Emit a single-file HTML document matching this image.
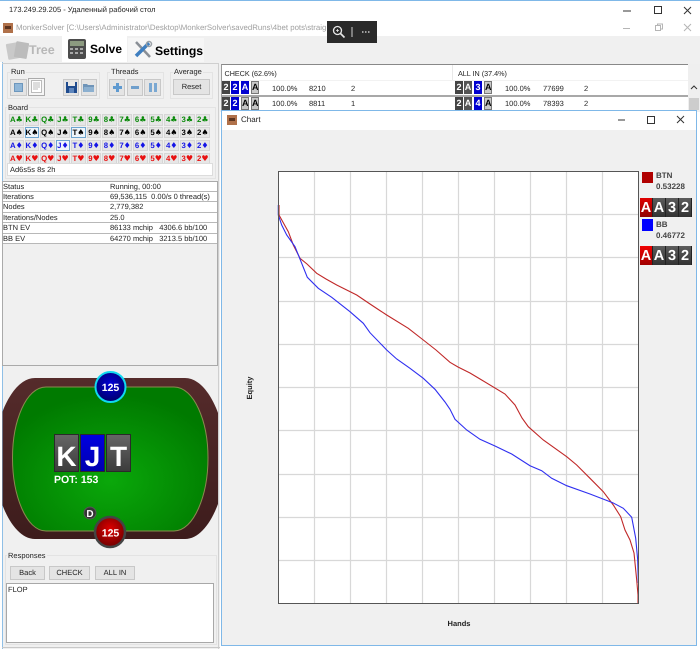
<!DOCTYPE html>
<html><head><meta charset="utf-8">
<style>
html,body{margin:0;padding:0;background:#fff}
#p{position:relative;width:700px;height:649px;overflow:hidden;background:#fff;font:7.500px "Liberation Sans","DejaVu Sans",sans-serif;color:#222;text-rendering:geometricPrecision}
.a,.t{position:absolute;white-space:nowrap}
.t{line-height:10px}
.gb{position:absolute;border:1px solid #e3e3e3;box-sizing:border-box}
.btn{position:absolute;background:#e4e4e4;border:1px solid #c8c8c8;box-sizing:border-box;text-align:center;line-height:12px;font-size:7.500px;color:#222}
#board{position:absolute;left:9px;top:114px;display:grid;grid-template-columns:repeat(13,15.55px);grid-auto-rows:12.85px}
#board span{display:block;width:14.5px;height:11.5px;box-sizing:border-box;background:#e6e6e6;border:1px solid #d6d6d6;font-size:7.800px;font-weight:bold;line-height:9.5px;text-align:center;overflow:hidden;white-space:nowrap}
#board span i{font:normal 8px/9.500px "DejaVu Sans",sans-serif}
#board span.h{background:#eef5fb;border:1px solid #6ea5d0}
.c{color:#0a8a0a}.s{color:#000}.d{color:#1414e6}.r{color:#e81010}
.row{position:absolute;left:3px;width:214px;border-bottom:1px solid #b8b8b8;box-sizing:border-box;background:#fff;line-height:9.500px;font-size:7.500px}
.row b{font-weight:normal;position:absolute;left:0}
.row i{font-style:normal;position:absolute;left:107px}
.k{position:absolute;width:8px;height:13px;box-sizing:border-box;font-size:9px;font-weight:bold;text-align:center;line-height:13px;color:#fff;background:#444}
.k.u{background:#0000d0}.k.l{background:#c8c8c8;color:#000;border:1px solid #777;line-height:11px}
.lg{position:absolute;width:13px;height:19px;box-sizing:border-box;background:linear-gradient(#5c5c5c,#333);border-right:1px solid #222;color:#fff;font:bold 14.500px/20px "Liberation Sans",sans-serif;text-align:center}
.f{position:absolute;width:25px;height:38px;box-sizing:border-box;border:1px solid #2a2a2a;background:linear-gradient(#666,#3c3c3c);color:#fff;font:bold 28px/44px "Liberation Sans",sans-serif;text-align:center}
</style></head><body><div id="p">

<div class="a" style="left:0;top:0;width:700px;height:1px;background:#7fb8e8"></div>
<div class="t" style="left:9px;top:5px;font-size:7.500px;color:#222">173.249.29.205 - Удаленный рабочий стол</div>
<svg class="a" style="left:650px;top:4px" width="50" height="14" fill="none" stroke="#333"><rect x="4.500" y="2.500" width="7" height="7"/><path d="M34 3l7 7M41 3l-7 7"/></svg>
<svg class="a" style="left:622px;top:4px" width="14" height="14" stroke="#333"><path d="M1 7h8"/></svg>

<div class="a" style="left:3px;top:23px;width:10px;height:10px;background:#b0714a"></div>
<div class="a" style="left:5px;top:26px;width:6px;height:3px;background:#5b3420"></div>
<div class="t" style="left:16px;top:23px;font-size:7.850px;color:#a0a0a0;width:311px;overflow:hidden">MonkerSolver [C:\Users\Administrator\Desktop\MonkerSolver\savedRuns\4bet pots\straig</div>
<svg class="a" style="left:622px;top:21px" width="14" height="14" stroke="#b5b5b5"><path d="M1 7.500h7"/></svg>
<svg class="a" style="left:650px;top:22px" width="50" height="12" fill="none" stroke="#b5b5b5"><rect x="5.500" y="3.500" width="5" height="5"/><path d="M7.500 3.500v-1.500h5v5h-2M34 2l7 7M41 2l-7 7"/></svg>

<div class="a" style="left:0;top:36px;width:700px;height:26px;background:#f0f0f0"></div>
<div class="a" style="left:62px;top:36px;width:65px;height:26px;background:#fff"></div>
<div class="a" style="left:128px;top:38px;width:76px;height:24px;background:#f6f6f6"></div>
<svg class="a" style="left:5px;top:39px" width="24" height="22"><g fill="#c9c9c9"><rect x="2" y="4" width="13" height="16" rx="1" transform="rotate(-10 8 12)"/><rect x="10" y="3" width="13" height="16" rx="1" transform="rotate(10 16 11)" fill="#bcbcbc"/></g></svg>
<div class="t" style="left:29px;top:43px;font:bold 12.500px/14px 'Liberation Sans',sans-serif;color:#b8b8b8">Tree</div>
<svg class="a" style="left:68px;top:39px" width="18" height="20"><rect x="0" y="0" width="18" height="20" rx="2" fill="#4c4c4c"/><rect x="2" y="2" width="14" height="5" fill="#8c9a80"/><g fill="#a8a8a8"><rect x="2" y="9" width="3" height="2"/><rect x="7" y="9" width="3" height="2"/><rect x="12" y="9" width="3" height="2"/><rect x="2" y="13" width="3" height="2"/><rect x="7" y="13" width="3" height="2"/><rect x="12" y="13" width="3" height="2"/></g></svg>
<div class="t" style="left:90px;top:42px;font:bold 12px/14px 'Liberation Sans',sans-serif;color:#000">Solve</div>
<svg class="a" style="left:132px;top:40px" width="21" height="20" fill="none"><path d="M4 2l14 15" stroke="#8a8f96" stroke-width="2.500"/><path d="M17 3L4 16" stroke="#3f7fc0" stroke-width="3.500"/><circle cx="17" cy="4" r="2.500" stroke="#9aa0a6" stroke-width="1.500"/></svg>
<div class="t" style="left:155px;top:44px;font:bold 12.200px/14px 'Liberation Sans',sans-serif;color:#000">Settings</div>

<!-- black overlay -->
<div class="a" style="left:327px;top:21px;width:50px;height:22px;background:#2a2a2a"></div>
<svg class="a" style="left:331px;top:24px" width="42" height="16" fill="none" stroke="#e8e8e8"><circle cx="6.500" cy="6.500" r="4" stroke-width="1.300"/><path d="M9.500 9.500l4 4" stroke-width="1.600"/><path d="M6.500 5v3M5 6.500h3" stroke-width=".8"/><path d="M21 3v10" stroke="#aaa" stroke-width="1.300"/><path d="M31 8h1.500M34 8h1.500M37 8h1.500" stroke-width="1.300"/></svg>

<!-- left panel -->
<div class="a" style="left:2px;top:62px;width:218px;height:587px;background:#f0f0f0"></div>
<div class="a" style="left:1.500px;top:62px;width:1px;height:587px;background:#8fbfe6"></div>
<div class="a" style="left:2px;top:63px;width:217px;height:1px;background:#cfcfcf"></div>
<div class="a" style="left:218px;top:63px;width:1px;height:586px;background:#cfcfcf"></div>
<div class="gb" style="left:7px;top:72px;width:93px;height:27px"></div>
<div class="gb" style="left:107px;top:72px;width:57px;height:27px"></div>
<div class="gb" style="left:170px;top:72px;width:43px;height:27px"></div>
<div class="t" style="left:10px;top:67px;background:#f0f0f0;padding:0 1px">Run</div>
<div class="t" style="left:110px;top:67px;background:#f0f0f0;padding:0 1px">Threads</div>
<div class="t" style="left:173px;top:67px;background:#f0f0f0;padding:0 1px">Average</div>
<div class="btn" style="left:10px;top:79px;width:17px;height:17px"></div>
<div class="a" style="left:14px;top:83px;width:9px;height:9px;background:#8fb6d8;border:1px solid #6d97bd;box-sizing:border-box"></div>
<div class="btn" style="left:28px;top:78px;width:17px;height:18px;background:#f6f6f6;border-color:#aaa"></div>
<svg class="a" style="left:31px;top:80px" width="11" height="13" fill="#fff" stroke="#bbb"><rect x=".5" y=".5" width="10" height="12"/><path d="M2 3h7M2 5h7M2 7h7M2 9h5"/></svg>
<div class="btn" style="left:63px;top:79px;width:16px;height:17px"></div>
<svg class="a" style="left:66px;top:82px" width="11" height="11"><rect width="11" height="11" fill="#1f4b8e"/><rect x="2" y="0" width="7" height="4" fill="#e8e8e8"/><rect x="3" y="6" width="5" height="5" fill="#5e86bd"/></svg>
<div class="btn" style="left:81px;top:79px;width:16px;height:17px"></div>
<svg class="a" style="left:83px;top:82px" width="12" height="11"><path d="M0 2h4l1 1h6v7H0z" fill="#6f94b8"/><path d="M0 10l1-5h10v5z" fill="#8cb0d0"/></svg>
<div class="btn" style="left:109px;top:79px;width:16px;height:17px"></div>
<svg class="a" style="left:112px;top:82px" width="11" height="11"><path d="M4 1h3v3h3v3H7v3H4V7H1V4h3z" fill="#5f9ad0"/></svg>
<div class="btn" style="left:127px;top:79px;width:16px;height:17px"></div>
<div class="a" style="left:131px;top:86px;width:8px;height:3px;background:#6f9fcc"></div>
<div class="btn" style="left:144px;top:79px;width:17px;height:17px"></div>
<div class="a" style="left:149px;top:83px;width:2.500px;height:9px;background:#7aa8d2"></div>
<div class="a" style="left:154px;top:83px;width:2.500px;height:9px;background:#7aa8d2"></div>
<div class="btn" style="left:173px;top:79px;width:37px;height:16px;line-height:14px">Reset</div>

<div class="gb" style="left:5px;top:107px;width:211px;height:72px"></div>
<div class="t" style="left:7px;top:103px;background:#f0f0f0;padding:0 1px">Board</div>
<div id="board">
<span class="c">A<i>♣</i></span><span class="c">K<i>♣</i></span><span class="c">Q<i>♣</i></span><span class="c">J<i>♣</i></span><span class="c">T<i>♣</i></span><span class="c">9<i>♣</i></span><span class="c">8<i>♣</i></span><span class="c">7<i>♣</i></span><span class="c">6<i>♣</i></span><span class="c">5<i>♣</i></span><span class="c">4<i>♣</i></span><span class="c">3<i>♣</i></span><span class="c">2<i>♣</i></span>
<span class="s">A<i>♠</i></span><span class="s h">K<i>♠</i></span><span class="s">Q<i>♠</i></span><span class="s">J<i>♠</i></span><span class="s h">T<i>♠</i></span><span class="s">9<i>♠</i></span><span class="s">8<i>♠</i></span><span class="s">7<i>♠</i></span><span class="s">6<i>♠</i></span><span class="s">5<i>♠</i></span><span class="s">4<i>♠</i></span><span class="s">3<i>♠</i></span><span class="s">2<i>♠</i></span>
<span class="d">A<i>♦</i></span><span class="d">K<i>♦</i></span><span class="d">Q<i>♦</i></span><span class="d h">J<i>♦</i></span><span class="d">T<i>♦</i></span><span class="d">9<i>♦</i></span><span class="d">8<i>♦</i></span><span class="d">7<i>♦</i></span><span class="d">6<i>♦</i></span><span class="d">5<i>♦</i></span><span class="d">4<i>♦</i></span><span class="d">3<i>♦</i></span><span class="d">2<i>♦</i></span>
<span class="r">A<i>♥</i></span><span class="r">K<i>♥</i></span><span class="r">Q<i>♥</i></span><span class="r">J<i>♥</i></span><span class="r">T<i>♥</i></span><span class="r">9<i>♥</i></span><span class="r">8<i>♥</i></span><span class="r">7<i>♥</i></span><span class="r">6<i>♥</i></span><span class="r">5<i>♥</i></span><span class="r">4<i>♥</i></span><span class="r">3<i>♥</i></span><span class="r">2<i>♥</i></span>
</div>
<div class="a" style="left:7px;top:163px;width:206px;height:13px;background:#fff;border:1px solid #dcdcdc;box-sizing:border-box;padding-left:2px;line-height:11px;font-size:7.500px">Ad6s5s 8s 2h</div>

<div class="a" style="left:2px;top:181px;width:216px;height:185px;border:1px solid #aaa;box-sizing:border-box;background:#f0f0f0"></div>
<div class="row" style="top:182px;height:10px"><b>Status</b><i>Running, 00:00</i></div>
<div class="row" style="top:192px;height:10px"><b>Iterations</b><i>69,536,115&nbsp; 0.00/s 0 thread(s)</i></div>
<div class="row" style="top:202px;height:11px"><b>Nodes</b><i>2,779,382</i></div>
<div class="row" style="top:213px;height:10px"><b>Iterations/Nodes</b><i>25.0</i></div>
<div class="row" style="top:223px;height:11px"><b>BTN EV</b><i>86133 mchip&nbsp; &nbsp;4306.6 bb/100</i></div>
<div class="row" style="top:234px;height:10px"><b>BB EV</b><i>64270 mchip&nbsp; &nbsp;3213.5 bb/100</i></div>

<!-- poker table -->
<svg class="a" style="left:0;top:365px" width="222" height="185">
<defs>
<clipPath id="cl"><rect x="2.500" y="0" width="215.500" height="185"/></clipPath>
<radialGradient id="g" cx="50%" cy="65%" r="60%"><stop offset="0" stop-color="#0aa80a"/><stop offset="1" stop-color="#007a00"/></radialGradient>
<linearGradient id="w" x1="0" y1="0" x2="0" y2="1"><stop offset="0" stop-color="#552b2b"/><stop offset="1" stop-color="#3d1c1c"/></linearGradient>
<radialGradient id="bl" cx="50%" cy="40%" r="60%"><stop offset="0" stop-color="#0000d8"/><stop offset="1" stop-color="#00006a"/></radialGradient>
<radialGradient id="rd" cx="50%" cy="40%" r="60%"><stop offset="0" stop-color="#e00000"/><stop offset="1" stop-color="#700000"/></radialGradient>
</defs>
<path clip-path="url(#cl)" d="M35 13H185C208 13 226 55 226 93C226 132 208 174 185 174H35C12 174 -6 132 -6 93C-6 55 12 13 35 13Z" fill="url(#w)"/>
<path d="M46 22H174C194 22 208 56 208 93C208 130 194 166 174 166H46C26 166 12.500 130 12.500 93C12.500 56 26 22 46 22Z" fill="url(#g)" stroke="#8a8a50" stroke-width="1"/>
<circle cx="110.500" cy="22" r="15" fill="url(#bl)" stroke="#10d8f0" stroke-width="2"/>
<circle cx="110" cy="167" r="15" fill="url(#rd)" stroke="#444" stroke-width="2.500"/>
<circle cx="90" cy="148" r="6" fill="#333" stroke="#555"/>
<text x="110.500" y="26" fill="#fff" font-family="Liberation Sans" font-weight="bold" font-size="10.500" text-anchor="middle">125</text>
<text x="110.500" y="171.500" fill="#fff" font-family="Liberation Sans" font-weight="bold" font-size="10.500" text-anchor="middle">125</text>
<text x="90" y="152" fill="#fff" font-family="Liberation Sans" font-weight="bold" font-size="10" text-anchor="middle">D</text>
</svg>
<div class="f" style="left:54px;top:434px">K</div>
<div class="f" style="left:80px;top:434px;background:linear-gradient(#0000e0,#0000b0)">J</div>
<div class="f" style="left:106px;top:434px">T</div>
<div class="t" style="left:54px;top:474.500px;font:bold 10.500px/10px 'Liberation Sans',sans-serif;color:#fff">POT: 153</div>

<div class="gb" style="left:5px;top:555px;width:212px;height:90px"></div>
<div class="t" style="left:7px;top:551px;background:#f0f0f0;padding:0 1px">Responses</div>
<div class="btn" style="left:10px;top:566px;width:35px;height:13.500px">Back</div>
<div class="btn" style="left:49px;top:566px;width:41px;height:13.500px">CHECK</div>
<div class="btn" style="left:95px;top:566px;width:40px;height:13.500px">ALL IN</div>
<div class="a" style="left:6px;top:583px;width:208px;height:60px;background:#fff;border:1px solid #a8a8a8;box-sizing:border-box;padding:1px;line-height:10px;font-size:7.500px">FLOP</div>
<div class="a" style="left:2px;top:647px;width:218px;height:1px;background:#c8c8c8"></div>

<!-- right table -->
<div class="a" style="left:220px;top:62px;width:480px;height:50px;background:#f0f0f0"></div>
<div class="a" style="left:221px;top:64px;width:467px;height:46px;background:#fff;border-top:1.500px solid #888;border-left:1px solid #999;box-sizing:border-box"></div>
<div class="a" style="left:452px;top:65px;width:1px;height:15px;background:#e8e8e8"></div>
<div class="t" style="left:224.500px;top:68.500px;font-size:7.200px">CHECK (62.6%)</div>
<div class="t" style="left:458px;top:68.500px;font-size:7.200px">ALL IN (37.4%)</div>
<div class="a" style="left:222px;top:95px;width:466px;height:1.500px;background:#a8a8a8"></div>
<div class="a" style="left:222px;top:80px;width:466px;height:1px;background:#f2f2f2"></div>

<div class="k" style="left:222px;top:81px">2</div><div class="k u" style="left:231px;top:81px">2</div><div class="k u" style="left:241px;top:81px">A</div><div class="k l" style="left:251px;top:81px">A</div>
<div class="t" style="left:272px;top:84px">100.0%</div><div class="t" style="left:309px;top:84px">8210</div><div class="t" style="left:351px;top:84px">2</div>
<div class="k" style="left:455px;top:81px">2</div><div class="k" style="left:464px;top:81px;background:#555">A</div><div class="k u" style="left:474px;top:81px">3</div><div class="k l" style="left:484px;top:81px">A</div>
<div class="t" style="left:505px;top:84px">100.0%</div><div class="t" style="left:543px;top:84px">77699</div><div class="t" style="left:584px;top:84px">2</div>

<div class="k" style="left:222px;top:97px">2</div><div class="k u" style="left:231px;top:97px">2</div><div class="k l" style="left:241px;top:97px">A</div><div class="k l" style="left:251px;top:97px">A</div>
<div class="t" style="left:272px;top:99px">100.0%</div><div class="t" style="left:309px;top:99px">8811</div><div class="t" style="left:351px;top:99px">1</div>
<div class="k" style="left:455px;top:97px">2</div><div class="k" style="left:464px;top:97px;background:#555">A</div><div class="k u" style="left:474px;top:97px">4</div><div class="k l" style="left:484px;top:97px">A</div>
<div class="t" style="left:505px;top:99px">100.0%</div><div class="t" style="left:543px;top:99px">78393</div><div class="t" style="left:584px;top:99px">2</div>

<div class="a" style="left:688px;top:64px;width:12px;height:46px;background:#efefef"></div>
<svg class="a" style="left:689px;top:83px" width="10" height="8" fill="none" stroke="#333"><path d="M2 6l3-3 3 3"/></svg>
<div class="a" style="left:689px;top:98px;width:10px;height:12px;background:#cdcdcd"></div>

<!-- chart window -->
<div class="a" style="left:221px;top:110px;width:476px;height:536px;background:#f0f0f0;border:1px solid #7fb8e8;box-sizing:border-box"></div>
<div class="a" style="left:222px;top:111px;width:474px;height:19px;background:#fff"></div>
<div class="a" style="left:227px;top:115px;width:10px;height:10px;background:#b0714a"></div>
<div class="a" style="left:229px;top:118px;width:6px;height:3px;background:#5b3420"></div>
<div class="t" style="left:241px;top:115px;font-size:8px">Chart</div>
<svg class="a" style="left:615px;top:113px" width="72" height="14" fill="none" stroke="#333"><path d="M3 7h7"/><rect x="32.500" y="3.500" width="7" height="7"/><path d="M62 3l7 7M69 3l-7 7"/></svg>

<svg class="a" style="left:0;top:0" width="700" height="649">
<rect x="278.500" y="171.500" width="360" height="432" fill="#fff"/>
<g stroke="#d8d8d8" stroke-width="1.200" fill="none">
<path d="M314.500 172V603M350.500 172V603M386.500 172V603M422.500 172V603M458.500 172V603M494.500 172V603M530.500 172V603M566.500 172V603M602.500 172V603"/>
<path d="M279 214.500H638M279 257.500H638M279 301.500H638M279 344.500H638M279 387.500H638M279 430.500H638M279 474.500H638M279 517.500H638M279 560.500H638"/>
</g>
<polyline fill="none" stroke="#c02828" stroke-width="1.100" points="279,205 279,215 284,224 288.300,231.700 293.300,245 300,258.300 307,264 316.700,273.300 326,279 336.700,285 356.700,295 370,304 386.700,315 408.300,328.300 423.300,340 436,350 450,362.300 458,367 470,373 481.700,380 505,394 515,405 522,418 528.300,426.700 543.300,440 566.700,456.700 576.700,465 590,478.300 603.300,491.700 613.300,505 620.700,516.700 625,530 630,540 634,553 636.700,580 638,595 638,603"/>
<polyline fill="none" stroke="#2f2ff0" stroke-width="1.100" points="278.300,205 278.300,215 281.700,225 286.700,235 295,246.700 301.700,263.300 307.300,277.300 318.300,288.300 331.700,297.300 350,311.700 363.300,323.300 370,332.700 386.700,350 396.700,359 410,368.300 423.300,378.300 435,389.300 445,402 450,409.300 455,419.300 466.700,430 480,439.300 495,446 511.700,454 530,465.700 541.700,470.700 551.700,478.300 566.700,485.700 590,494 612.700,502.700 623.300,508.300 631.700,517.300 635.700,538.300 637.700,560 638.300,583"/>
<rect x="278.500" y="171.500" width="360" height="432" fill="none" stroke="#555" stroke-width="1"/>
<text x="252" y="388" transform="rotate(-90 252 388)" font-family="Liberation Sans" font-weight="bold" font-size="7.500" fill="#222" text-anchor="middle">Equity</text>
<text x="459" y="626" font-family="Liberation Sans" font-weight="bold" font-size="7.500" fill="#222" text-anchor="middle">Hands</text>
</svg>

<div class="a" style="left:642px;top:172px;width:11px;height:11px;background:#b00000"></div>
<div class="t" style="left:656px;top:171px;font-weight:bold;font-size:8px;color:#444">BTN</div>
<div class="t" style="left:656px;top:182px;font-weight:bold;font-size:8px;color:#444">0.53228</div>
<div class="lg" style="left:640px;top:198px;background:linear-gradient(#e00000,#900000)">A</div><div class="lg" style="left:653px;top:198px">A</div><div class="lg" style="left:666px;top:198px">3</div><div class="lg" style="left:679px;top:198px">2</div>
<div class="a" style="left:642px;top:219px;width:11px;height:12px;background:#0000ff"></div>
<div class="t" style="left:656px;top:220px;font-weight:bold;font-size:8px;color:#444">BB</div>
<div class="t" style="left:656px;top:231px;font-weight:bold;font-size:8px;color:#444">0.46772</div>
<div class="lg" style="left:640px;top:246px;background:linear-gradient(#f00000,#a00000)">A</div><div class="lg" style="left:653px;top:246px">A</div><div class="lg" style="left:666px;top:246px">3</div><div class="lg" style="left:679px;top:246px">2</div>

</div></body></html>
